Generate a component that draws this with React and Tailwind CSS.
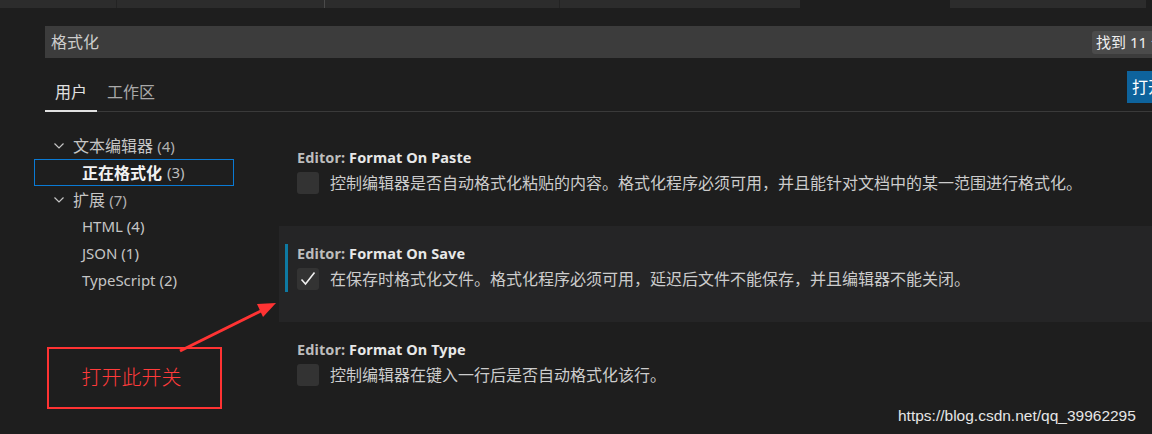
import React from "react";

const font = { fontFamily: '"Noto Sans", "Noto Sans CJK SC", sans-serif' };

const tabs = [
  { w: "w-[117px]", bg: "bg-[#2c2c2c]", border: "border-r border-[#232323]" },
  { w: "w-[208px]", bg: "bg-[#2c2c2c]", border: "border-r border-[#4a4a4a]" },
  { w: "w-[235px]", bg: "bg-[#2c2c2c]", border: "border-r border-[#232323]" },
  { w: "w-[240px]", bg: "bg-[#2c2c2c]", border: "" },
  { w: "w-[150px]", bg: "bg-[#1e1e1e]", border: "" },
  { w: "w-[196px]", bg: "bg-[#2c2c2c]", border: "" },
];

const Chevron = () => (
  <svg width="12" height="12" viewBox="0 0 12 12" className="mr-[8px] shrink-0">
    <polyline points="1.5,3.5 6,8 10.5,3.5" fill="none" stroke="#c5c5c5" strokeWidth="1.2" />
  </svg>
);

const TreeRow = ({ children, selected, indent }) => (
  <div
    className={`h-[27px] flex items-center ${indent ? "pl-[47px]" : "pl-[18px]"} ${
      selected ? "border border-[#0a7ad4]" : "border border-transparent"
    }`}
  >
    {children}
  </div>
);

const Setting = ({ title, desc, checked, focused }) => (
  <div className={`h-[96px] relative pl-[18px] pt-[16px] ${focused ? "bg-[#252526]" : ""}`}>
    {focused && <div className="absolute left-[6px] top-[18px] w-[3px] h-[48px] bg-[#0e7aa3]" />}
    <div className="text-[14.5px] font-bold leading-[22px] tracking-[0.1px]">
      <span className="text-[#bdbdbd]">Editor: </span>
      <span className="text-[#e8e8e8]">{title}</span>
    </div>
    <div className="flex items-center mt-[3px]">
      <div className="w-[22px] h-[22px] rounded-[3px] bg-[#333333] flex items-center justify-center shrink-0">
        {checked && (
          <svg width="20" height="20" viewBox="0 0 20 20">
            <polyline points="3.5,10.5 7.5,15 16.5,3.5" fill="none" stroke="#f0f0f0" strokeWidth="1.6" />
          </svg>
        )}
      </div>
      <div className="ml-[11px] text-[16px] text-[#cccccc] whitespace-nowrap">{desc}</div>
    </div>
  </div>
);

export default function App() {
  return (
    <div className="w-[1152px] h-[434px] bg-[#1e1e1e] overflow-hidden relative" style={font}>
      {/* editor tab strip */}
      <div className="flex h-[8px]">
        {tabs.map((t, i) => (
          <div key={i} className={`${t.w} h-full ${t.bg} ${t.border}`} />
        ))}
      </div>

      {/* search */}
      <div className="mt-[18px] ml-[45px] h-[32px] bg-[#3c3c3c] flex items-center pl-[6px] relative">
        <span className="text-[16px] text-[#cccccc]">格式化</span>
        <div className="absolute left-[1047px] top-[5px] h-[23px] bg-[#4b4b4b] rounded-[3px] pl-[4px] pr-[8px] flex items-center whitespace-nowrap">
          <span className="text-[15px] text-[#f0f0f0]">找到 11 个设置</span>
        </div>
      </div>

      {/* scope tabs */}
      <div className="ml-[45px] h-[54px] flex items-end relative">
        <div className="flex items-end w-full border-b border-[#3a3a3a]">
          <div className="w-[52px] pl-[10px] pb-[6px] text-[16px] text-[#e0e0e0] border-b-2 border-[#e0e0e0] -mb-[1px]">
            用户
          </div>
          <div className="pl-[10px] pb-[7px] text-[16px] text-[#a9a9a9]">工作区</div>
        </div>
        <div className="absolute left-[1082px] top-[13px] h-[32px] w-[80px] bg-[#0e639c] flex items-center pl-[5px]">
          <span className="text-[16px] text-white whitespace-nowrap">打开设置</span>
        </div>
      </div>

      {/* body */}
      <div className="flex">
        <div className="w-[279px] shrink-0 pt-[20px] pl-[34px]">
          <div className="w-[200px] text-[16px] text-[#c5c5c5]">
            <TreeRow>
              <Chevron />
              <span>
                文本编辑器 <span className="text-[15px] text-[#b0b0b0]">(4)</span>
              </span>
            </TreeRow>
            <TreeRow selected indent>
              <span className="font-bold text-[#f2f2f2]">正在格式化</span>
              <span className="ml-[5px] text-[15px] text-[#bdbdbd]">(3)</span>
            </TreeRow>
            <TreeRow>
              <Chevron />
              <span>
                扩展 <span className="text-[15px] text-[#b0b0b0]">(7)</span>
              </span>
            </TreeRow>
            <TreeRow indent>
              <span className="text-[15px]">HTML (4)</span>
            </TreeRow>
            <TreeRow indent>
              <span className="text-[15px]">JSON (1)</span>
            </TreeRow>
            <TreeRow indent>
              <span className="text-[15px]">TypeScript (2)</span>
            </TreeRow>
          </div>
        </div>

        <div className="flex-1 pt-[18px]">
          <Setting
            title="Format On Paste"
            desc="控制编辑器是否自动格式化粘贴的内容。格式化程序必须可用，并且能针对文档中的某一范围进行格式化。"
          />
          <Setting
            focused
            checked
            title="Format On Save"
            desc="在保存时格式化文件。格式化程序必须可用，延迟后文件不能保存，并且编辑器不能关闭。"
          />
          <Setting title="Format On Type" desc="控制编辑器在键入一行后是否自动格式化该行。" />
        </div>
      </div>

      {/* red annotation */}
      <div className="absolute left-[47px] top-[347px] w-[175px] h-[62px] border-2 border-[#ff3333] flex items-center justify-center">
        <span className="text-[20px] text-[#ff3b3b] font-light pr-[6px]">打开此开关</span>
      </div>
      <svg className="absolute left-0 top-0 pointer-events-none" width="1152" height="434">
        <line x1="180" y1="351" x2="265" y2="309" stroke="#ff3333" strokeWidth="3" />
        <polygon points="276,303 257,304 263,317" fill="#ff3333" />
      </svg>

      {/* watermark */}
      <div
        className="absolute left-[898px] top-[404px] text-[15.5px] text-[#e6e6e6]"
        style={{ fontFamily: '"Liberation Sans", Arial, sans-serif' }}
      >
        https://blog.csdn.net/qq_39962295
      </div>
    </div>
  );
}
